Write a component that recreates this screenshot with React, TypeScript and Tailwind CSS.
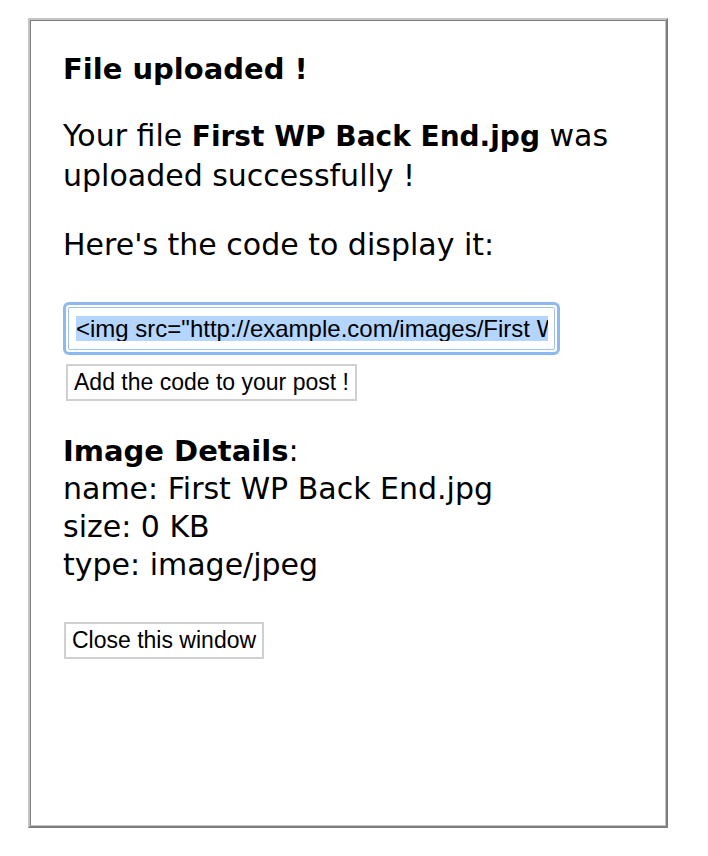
export default function App() {
  return (
    <div className="min-h-[856px] bg-white pl-[28px] pt-[18px]">
      {/* popup frame */}
      <div className="w-[640px] h-[810px] border-2 border-t-[#c4c4c4] border-l-[#c4c4c4] border-r-[#7d7d7d] border-b-[#7d7d7d]">
        <div className="h-full border border-t-[#7d7d7d] border-l-[#7d7d7d] border-r-[#c4c4c4] border-b-[#c4c4c4] bg-white pl-[32px] pr-[20px] pt-[30px] text-black font-['DejaVu_Sans',sans-serif]">
          <h3 className="text-[29px] font-bold leading-[36px]">File uploaded !</h3>

          <p className="mt-[29px] text-[30px] leading-[39px]">
            Your file <strong className="text-[28px]">First WP Back End.jpg</strong> was
            <br />
            uploaded successfully !
          </p>

          <p className="mt-[30px] text-[30px] leading-[39px]">Here's the code to display it:</p>

          <div className="mt-[38px] w-[497px] h-[53px] rounded-[6px] border-[3px] border-[#8db8f1] p-[2px]">
            <div className="h-full border border-[#9fc2ee] rounded-[2px] bg-white flex items-center pl-[7px] pr-[6px] overflow-hidden">
              <span className="whitespace-nowrap bg-[#b4d5fe] leading-[25px] text-[24px] font-['Liberation_Sans',sans-serif] overflow-hidden w-full block">
                &lt;img src="http://example.com/images/First WP Back End.jpg" /&gt;
              </span>
            </div>
          </div>

          <button className="mt-[9px] ml-[3px] h-[37px] px-[6px] border-2 border-[#d0d0d0] bg-white text-[23px] font-['Liberation_Sans',sans-serif] leading-none">
            Add the code to your post !
          </button>

          <div className="mt-[31px] text-[30px] leading-[38px]">
            <div>
              <strong className="text-[29px]">Image Details</strong>:
            </div>
            <div>name: First WP Back End.jpg</div>
            <div>size: 0 KB</div>
            <div>type: image/jpeg</div>
          </div>

          <button className="mt-[38px] ml-[1px] h-[37px] px-[6px] border-2 border-[#d0d0d0] bg-white text-[23px] font-['Liberation_Sans',sans-serif] leading-none">
            Close this window
          </button>
        </div>
      </div>
    </div>
  );
}
